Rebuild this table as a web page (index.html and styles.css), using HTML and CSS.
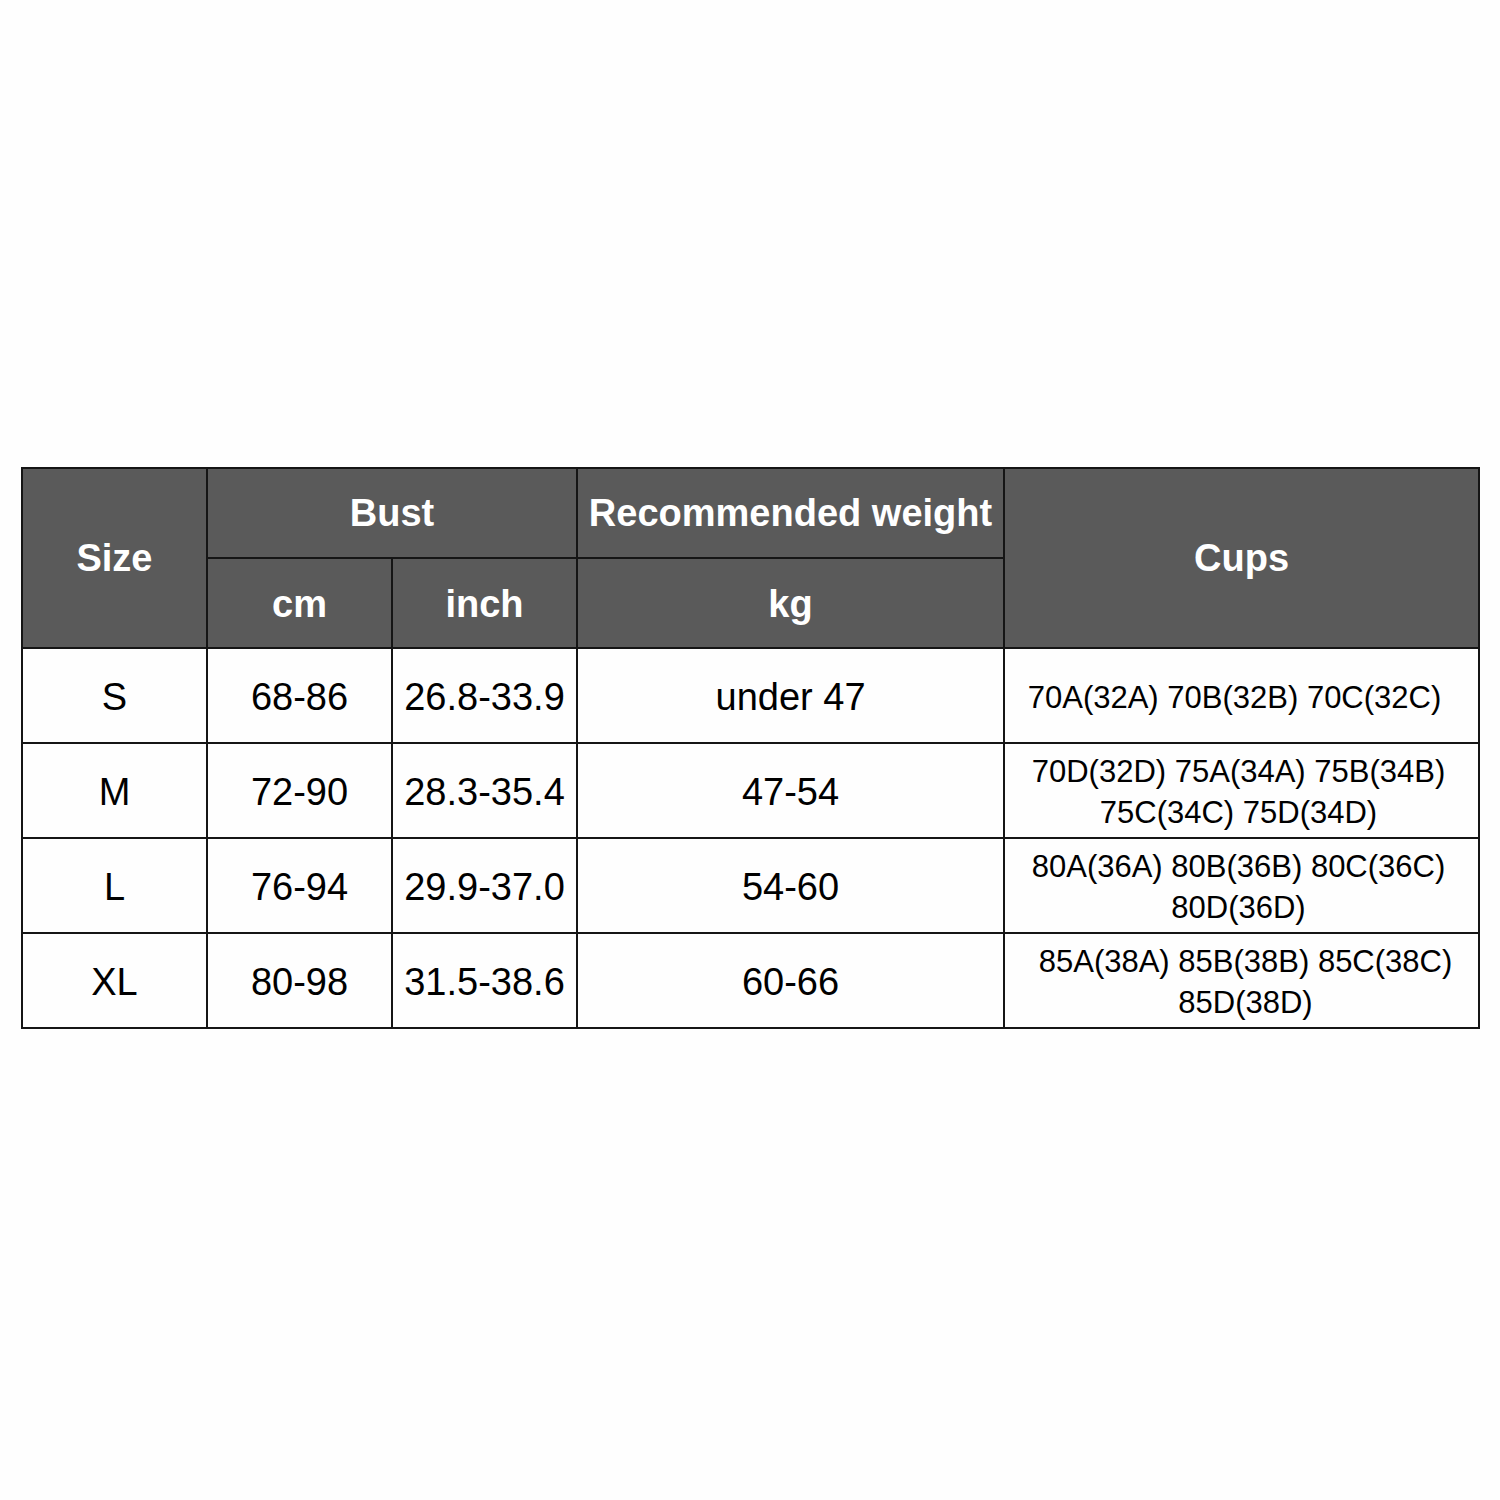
FILE: index.html
```html
<!DOCTYPE html>
<html>
<head>
<meta charset="utf-8">
<link rel="stylesheet" href="styles.css">
</head>
<body>
<div class="page">
<table class="chart">
  <colgroup>
    <col class="c1"><col class="c2"><col class="c3"><col class="c4"><col class="c5">
  </colgroup>
  <thead>
    <tr class="hrow">
      <th rowspan="2">Size</th>
      <th colspan="2">Bust</th>
      <th>Recommended weight</th>
      <th rowspan="2">Cups</th>
    </tr>
    <tr class="hrow">
      <th class="low">cm</th>
      <th class="low">inch</th>
      <th class="low">kg</th>
    </tr>
  </thead>
  <tbody>
    <tr class="brow">
      <td>S</td><td>68-86</td><td>26.8-33.9</td><td>under 47</td>
      <td class="cups first">70A(32A) 70B(32B) 70C(32C)</td>
    </tr>
    <tr class="brow">
      <td>M</td><td>72-90</td><td>28.3-35.4</td><td>47-54</td>
      <td class="cups">70D(32D) 75A(34A) 75B(34B)<br>75C(34C) 75D(34D)</td>
    </tr>
    <tr class="brow">
      <td>L</td><td>76-94</td><td>29.9-37.0</td><td>54-60</td>
      <td class="cups">80A(36A) 80B(36B) 80C(36C)<br>80D(36D)</td>
    </tr>
    <tr class="brow">
      <td>XL</td><td>80-98</td><td>31.5-38.6</td><td>60-66</td>
      <td class="cups shift">85A(38A) 85B(38B) 85C(38C)<br>85D(38D)</td>
    </tr>
  </tbody>
</table>
</div>
</body>
</html>
```

FILE: styles.css
```css
html, body {
  margin: 0;
  padding: 0;
  background: #fefefe;
}
.page {
  padding: 467px 0 0 21px;
}
.chart {
  border-collapse: collapse;
  table-layout: fixed;
  width: 1458px;
  font-family: "Liberation Sans", Arial, sans-serif;
}
.c1, .c2, .c3 { width: 185px; }
.c4 { width: 427px; }
.c5 { width: 475px; }
.hrow { height: 90px; }
.brow { height: 95px; }
.chart th, .chart td {
  border: 2px solid #151515;
  text-align: center;
  vertical-align: middle;
  padding: 0;
}
.chart th {
  background: #5a5a5a;
  color: #ffffff;
  font-weight: bold;
  font-size: 38px;
}
.chart th.low {
  padding-top: 3px;
}
.chart td {
  color: #000;
  font-size: 38px;
  padding-top: 3px;
}
.chart td.cups {
  font-size: 31px;
  line-height: 41px;
  padding-right: 6px;
}
.chart td.first {
  padding-right: 14px;
}
.chart td.shift {
  padding-left: 8px;
  padding-right: 0;
}
```
